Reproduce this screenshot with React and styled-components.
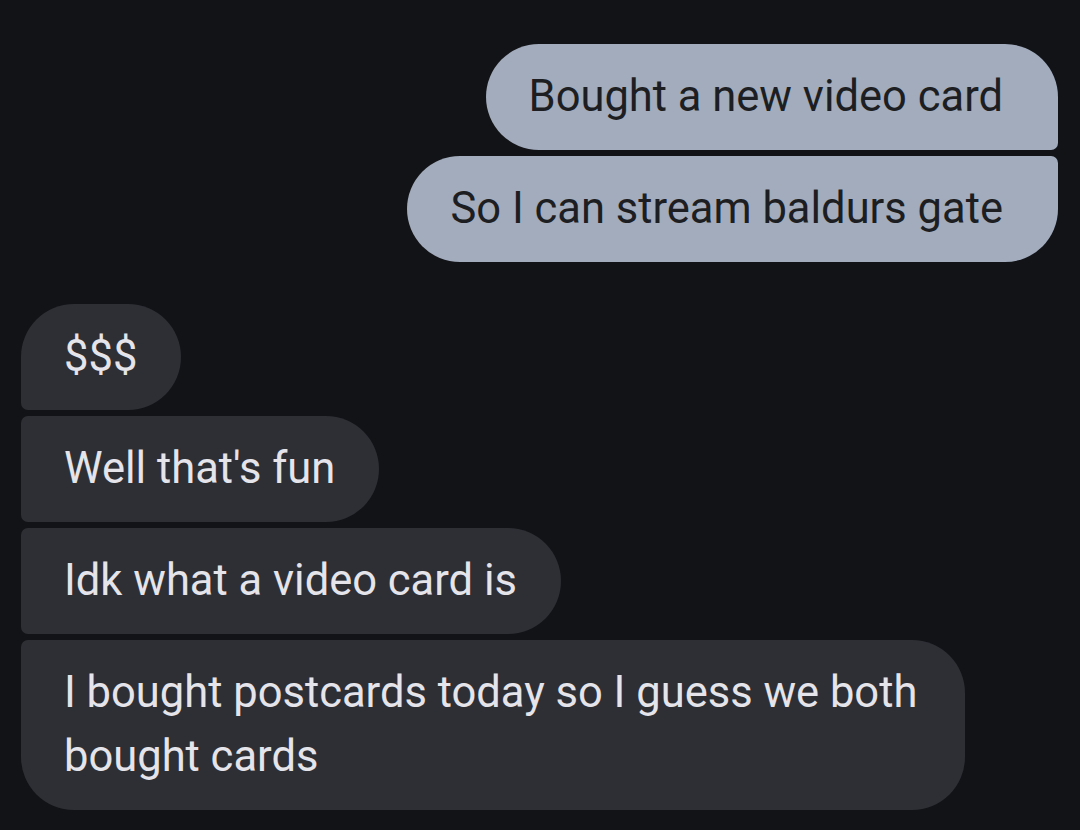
import React from "react";
import styled, { createGlobalStyle } from "styled-components";

const Global = createGlobalStyle`
  html, body { margin: 0; padding: 0; background: #121317; }
  body { width: 1080px; height: 830px; overflow: hidden; }
`;

const Thread = styled.div`
  width: 1080px;
  height: 830px;
  box-sizing: border-box;
  padding: 44px 22px 0 21px;
  display: flex;
  flex-direction: column;
  gap: 42px;
  background: #121317;
  font-family: Roboto, "Open Sans", sans-serif;
`;

const Group = styled.div`
  display: flex;
  flex-direction: column;
  align-items: ${(p) => (p.$out ? "flex-end" : "flex-start")};
  gap: 6px;
`;

const Bubble = styled.div`
  box-sizing: border-box;
  max-width: 944px;
  padding: 21px ${(p) => (p.$out ? "55px" : "44px")} 21px 43px;
  font-size: 43.5px;
  line-height: 64px;
  letter-spacing: 0;
  background: ${(p) => (p.$out ? "#a2acbd" : "#2e2f35")};
  color: ${(p) => (p.$out ? "#1d1e22" : "#e4e4ea")};
  border-radius: ${(p) => p.$r};
`;

const L = "53px";
const S = "7px";
const r = (tl, tr, br, bl) => `${tl} ${tr} ${br} ${bl}`;

export default function App() {
  return (
    <>
      <Global />
      <Thread>
        <Group $out>
          <Bubble $out $r={r(L, L, S, L)}>
            Bought a new video card
          </Bubble>
          <Bubble $out $r={r(L, S, L, L)}>
            So I can stream baldurs gate
          </Bubble>
        </Group>
        <Group>
          <Bubble $r={r(L, L, L, S)}>$$$</Bubble>
          <Bubble $r={r(S, L, L, S)}>Well that's fun</Bubble>
          <Bubble $r={r(S, L, L, S)}>Idk what a video card is</Bubble>
          <Bubble $r={r(S, L, L, L)}>
            I bought postcards today so I guess we both bought cards
          </Bubble>
        </Group>
      </Thread>
    </>
  );
}
